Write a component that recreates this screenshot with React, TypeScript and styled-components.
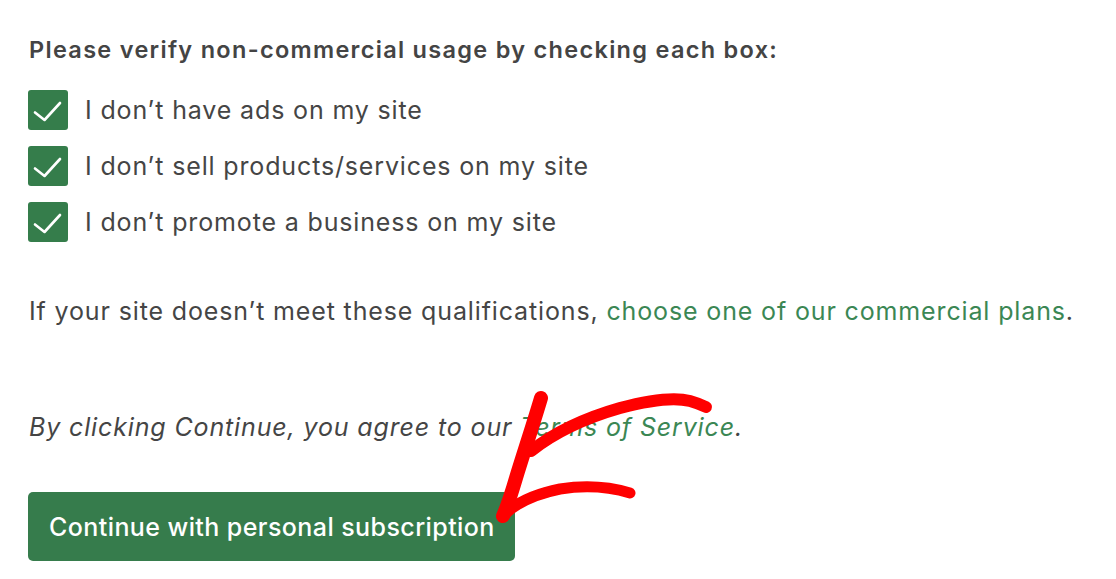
import React from "react";
import styled, { createGlobalStyle } from "styled-components";

const GlobalStyle = createGlobalStyle`
  html, body { margin: 0; padding: 0; background: #ffffff; }
  body { font-family: Inter, "Noto Sans", Arial, sans-serif; color: #444444; }
`;

const Page = styled.main`
  position: relative;
  width: 1116px;
  height: 579px;
  box-sizing: border-box;
  padding: 35px 28px 0 28px;
  display: flex;
  flex-direction: column;
  overflow: hidden;
`;

const Heading = styled.h2`
  margin: 0 0 0 1px;
  font-size: 23.5px;
  line-height: 30px;
  font-weight: 600;
  color: #444444;
  letter-spacing: 1.3px;
`;

const CheckList = styled.ul`
  list-style: none;
  margin: 25px 0 0 0;
  padding: 0;
  display: flex;
  flex-direction: column;
  gap: 16px;
`;

const CheckRow = styled.li`
  display: flex;
  align-items: center;
  gap: 17px;
  height: 40px;
`;

const Box = styled.span`
  width: 40px;
  height: 40px;
  border-radius: 3px;
  background: #357d4b;
  display: flex;
  align-items: center;
  justify-content: center;
  flex-shrink: 0;
`;

const Label = styled.span`
  font-size: 25px;
  line-height: 40px;
  color: #454545;
  letter-spacing: 0.85px;
`;

const Para = styled.p<{ $italic?: boolean; $top: number }>`
  margin: ${(p) => p.$top}px 0 0 1px;
  font-size: 25px;
  line-height: 36px;
  color: #454545;
  letter-spacing: 0.86px;
  font-style: ${(p) => (p.$italic ? "italic" : "normal")};
`;

const Link = styled.a`
  color: #3b8754;
  text-decoration: none;
`;

const Button = styled.button`
  margin-top: 47px;
  align-self: flex-start;
  height: 69px;
  padding: 0 20px 0 21px;
  border: none;
  border-radius: 5px;
  background: #367c4c;
  color: #ffffff;
  font-family: Inter, "Noto Sans", Arial, sans-serif;
  font-size: 25px;
  font-weight: 500;
  letter-spacing: 0.42px;
  cursor: pointer;
`;

const ArrowLayer = styled.svg`
  position: absolute;
  left: 0;
  top: 0;
  width: 1116px;
  height: 579px;
  pointer-events: none;
`;

const Check = () => (
  <svg width="40" height="40" viewBox="0 0 40 40" aria-hidden="true">
    <path d="M7 22.5 L16.5 30 L32 13" fill="none" stroke="#ffffff" strokeWidth="2.6" strokeLinecap="round" strokeLinejoin="round" />
  </svg>
);

const items = [
  "I don’t have ads on my site",
  "I don’t sell products/services on my site",
  "I don’t promote a business on my site",
];

export default function App() {
  return (
    <>
      <GlobalStyle />
      <Page>
        <Heading>Please verify non-commercial usage by checking each box:</Heading>
        <CheckList>
          {items.map((t) => (
            <CheckRow key={t}>
              <Box>
                <Check />
              </Box>
              <Label>{t}</Label>
            </CheckRow>
          ))}
        </CheckList>
        <Para $top={51}>
          If your site doesn’t meet these qualifications, <Link href="#">choose one of our commercial plans</Link>.
        </Para>
        <Para $top={80} $italic>
          By clicking Continue, you agree to our <Link href="#">Terms of Service</Link>.
        </Para>
        <Button>Continue with personal subscription</Button>
        <ArrowLayer viewBox="0 0 1116 579" aria-hidden="true">
          <g fill="none" stroke="#ff0000" strokeLinecap="round" strokeLinejoin="round">
            <path d="M541 398 C533 425 523 455 516 478 C511 495 507 507 503 516" strokeWidth="14" />
            <path d="M531 451 C555 432 585 418 620 408 C650 400 675 397 690 401 C697 403 702 405 706 407" strokeWidth="12" />
            <path d="M502 517 C515 503 535 494 560 489 C585 485 610 487 630 493" strokeWidth="11" />
          </g>
        </ArrowLayer>
      </Page>
    </>
  );
}
